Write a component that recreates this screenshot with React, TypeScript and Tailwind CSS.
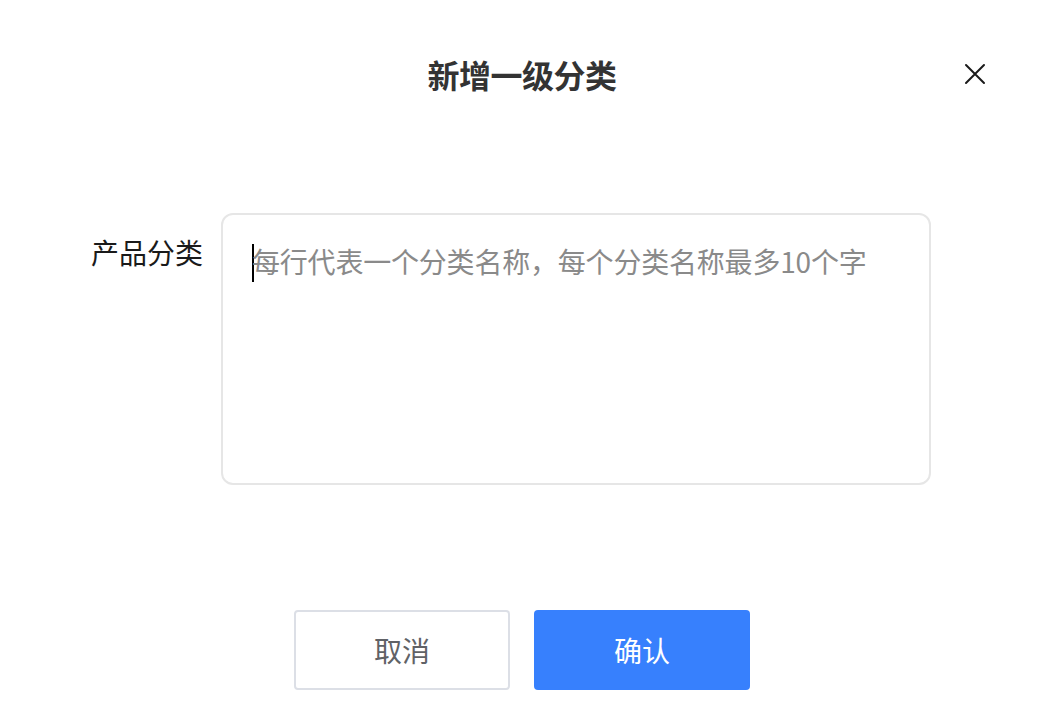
import React from "react";

export default function App() {
  return (
    <div
      className="w-[1048px] h-[728px] bg-white overflow-hidden"
      style={{ fontFamily: '"Noto Sans CJK SC", "Noto Sans", sans-serif' }}
    >
      <div className="relative h-[152px] flex items-center justify-center pb-[4px] pr-[4px]">
        <h1 className="text-[32px] leading-none font-bold text-[#333333] tracking-[-0.5px]">
          新增一级分类
        </h1>
        <button className="absolute left-[963px] top-[63px] w-[24px] h-[22px] flex items-center justify-center">
          <svg width="22" height="22" viewBox="0 0 22 22" fill="none">
            <path d="M2 2 L20 20 M20 2 L2 20" stroke="#1a1a1a" strokeWidth="2" strokeLinecap="round" />
          </svg>
        </button>
      </div>

      <div className="mt-[61px] flex pl-[91px]">
        <div className="w-[112px] pt-[23px] text-[28px] leading-[32px] text-[#1a1a1a]">产品分类</div>
        <div className="ml-[18px] w-[710px] h-[272px] rounded-[12px] border-2 border-[#e6e6e6] pl-[29px] pt-[28px]">
          <div className="flex items-center h-[40px]">
            <span className="w-[2px] h-[38px] bg-black -mr-[2px]" />
            <span className="text-[28px] leading-[40px] text-[#8a8a8a] tracking-[-0.2px] -mt-[5px]">
              每行代表一个分类名称，每个分类名称最多10个字
            </span>
          </div>
        </div>
      </div>

      <div className="mt-[125px] flex justify-center gap-[24px] pr-[4px]">
        <button className="w-[216px] h-[80px] rounded-[4px] border-2 border-[#dcdfe6] bg-white text-[28px] text-[#606266] flex items-center justify-center">
          取消
        </button>
        <button className="w-[216px] h-[80px] rounded-[4px] bg-[#3780fd] text-[28px] text-white flex items-center justify-center">
          确认
        </button>
      </div>
    </div>
  );
}
